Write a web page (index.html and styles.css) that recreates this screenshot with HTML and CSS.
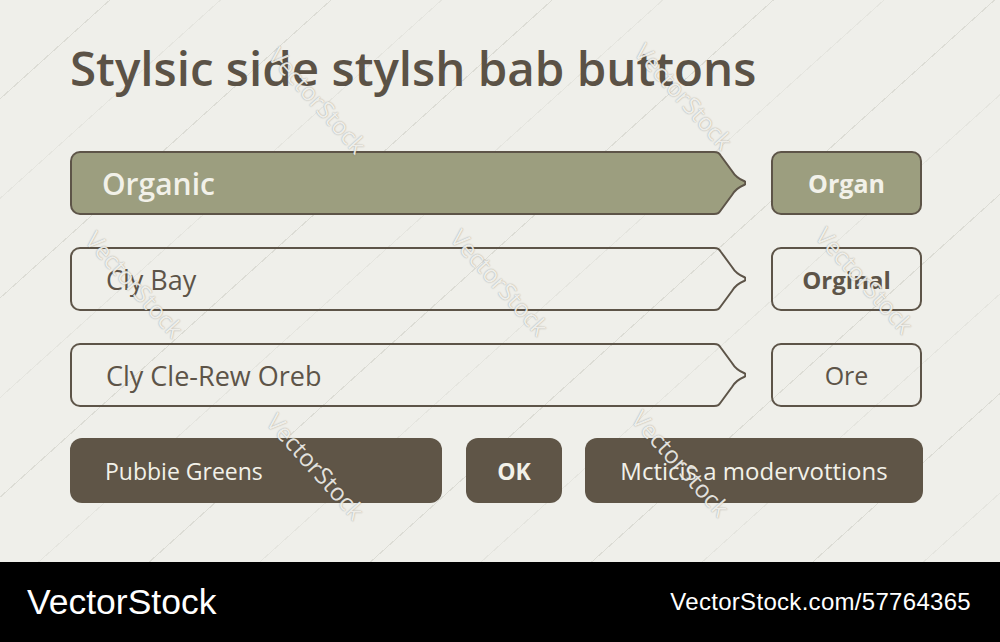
FILE: index.html
```html
<!DOCTYPE html>
<html lang="en">
<head>
    <meta charset="UTF-8">
    <meta name="viewport" content="width=device-width, initial-scale=1.0">
    <title>Stylsic side stylsh bab buttons</title>
    <link rel="stylesheet" href="styles.css">
</head>
<body>
    <div class="stage">
        <h1 class="title">Stylsic side stylsh bab buttons</h1>

        <div class="rows">
            <div class="row">
                <div class="tab tab-filled">
                    <div class="tab-body"><span class="tab-label label-light">Organic</span></div>
                    <svg class="tab-tip" width="34" height="64" viewBox="0 0 34 64">
                        <path class="tip-fill" d="M0 1 H2 C6 1 7 2 9 5 L20 20 C23 25 27 28 32 30 C34 31 34 33 32 34 C27 36 23 39 20 44 L9 59 C7 62 6 63 2 63 H0 Z"/>
                        <path class="tip-line" d="M0 1 H2 C6 1 7 2 9 5 L20 20 C23 25 27 28 32 30 C34 31 34 33 32 34 C27 36 23 39 20 44 L9 59 C7 62 6 63 2 63 H0"/>
                    </svg>
                </div>
                <div class="side-btn side-filled">Organ</div>
            </div>

            <div class="row">
                <div class="tab">
                    <div class="tab-body"><span class="tab-label">Cly Bay</span></div>
                    <svg class="tab-tip" width="34" height="64" viewBox="0 0 34 64">
                        <path class="tip-line" d="M0 1 H2 C6 1 7 2 9 5 L20 20 C23 25 27 28 32 30 C34 31 34 33 32 34 C27 36 23 39 20 44 L9 59 C7 62 6 63 2 63 H0"/>
                    </svg>
                </div>
                <div class="side-btn side-bold">Orginal</div>
            </div>

            <div class="row">
                <div class="tab">
                    <div class="tab-body"><span class="tab-label">Cly Cle-Rew Oreb</span></div>
                    <svg class="tab-tip" width="34" height="64" viewBox="0 0 34 64">
                        <path class="tip-line" d="M0 1 H2 C6 1 7 2 9 5 L20 20 C23 25 27 28 32 30 C34 31 34 33 32 34 C27 36 23 39 20 44 L9 59 C7 62 6 63 2 63 H0"/>
                    </svg>
                </div>
                <div class="side-btn">Ore</div>
            </div>

            <div class="row row-bottom">
                <div class="dark-btn dark-wide">Pubbie Greens</div>
                <div class="dark-btn dark-ok">OK</div>
                <div class="dark-btn dark-long">Mcticis a modervottions</div>
            </div>
        </div>

        <!-- watermarks -->
        <span class="mark" style="left: 318px; top: 100px;">VectorStock</span>
        <span class="mark" style="left: 684px; top: 96px;">VectorStock</span>
        <span class="mark" style="left: 135px; top: 284px;">VectorStock</span>
        <span class="mark" style="left: 500px; top: 282px;">VectorStock</span>
        <span class="mark" style="left: 865px; top: 280px;">VectorStock</span>
        <span class="mark" style="left: 316px; top: 466px;">VectorStock</span>
        <span class="mark" style="left: 681px; top: 463px;">VectorStock</span>
    </div>

    <div class="footer">
        <span class="brand">VectorStock</span>
        <span class="ref">VectorStock.com/57764365</span>
    </div>
</body>
</html>
```

FILE: styles.css
```css
body {
    margin: 0;
    width: 1000px;
    height: 642px;
    overflow: hidden;
    font-family: "Open Sans", "Noto Sans", sans-serif;
    color: #5d5448;
}

.stage {
    position: relative;
    height: 562px;
    box-sizing: border-box;
    padding: 40px 0 0 70px;
    overflow: hidden;
    background-color: #efefea;
    background-image:
        repeating-linear-gradient(138deg,
            transparent 0px, transparent 73px,
            #dcdcd5 73px, #dcdcd5 74px,
            transparent 74px, transparent 147px,
            #e5e5df 147px, #e5e5df 148px);
}

.title {
    margin: 0;
    font-size: 47.5px;
    line-height: 56px;
    font-weight: 600;
    color: #5b5246;
}

.rows {
    margin-top: 55px;
    display: flex;
    flex-direction: column;
    gap: 32px;
}

.row {
    display: flex;
    gap: 25px;
}

.row-bottom {
    margin-top: -1px;
    gap: 24px;
}

/* arrow tabs */
.tab {
    flex: none;
    width: 676px;
    height: 64px;
    display: flex;
}

.tab-body {
    flex: 1;
    box-sizing: border-box;
    height: 64px;
    border: 2px solid #5d5448;
    border-right: none;
    border-radius: 10px 0 0 10px;
    display: flex;
    align-items: center;
    padding-left: 34px;
}

.tab-filled .tab-body {
    background-color: #9c9e7f;
    padding-left: 30px;
}

.tab-tip {
    display: block;
    flex: none;
}

.tip-fill {
    fill: #9c9e7f;
}

.tip-line {
    fill: none;
    stroke: #5d5448;
    stroke-width: 2;
    stroke-linejoin: round;
}

.tab-label {
    font-size: 27px;
    color: #5d5448;
}

.label-light {
    font-size: 30px;
    font-weight: 600;
    color: #f2f1e9;
}

/* small buttons on the right */
.side-btn {
    flex: none;
    box-sizing: border-box;
    width: 151px;
    height: 64px;
    border: 2px solid #5d5448;
    border-radius: 10px;
    display: flex;
    align-items: center;
    justify-content: center;
    font-size: 25px;
    color: #5d5448;
}

.side-filled {
    background-color: #9c9e7f;
    color: #f2f1e9;
    font-weight: 700;
}

.side-bold {
    font-size: 24px;
    font-weight: 700;
}

/* dark buttons */
.dark-btn {
    flex: none;
    box-sizing: border-box;
    height: 65px;
    border-radius: 12px;
    background-color: #5f5547;
    color: #f2f1e9;
    display: flex;
    align-items: center;
    font-size: 23px;
}

.dark-wide {
    width: 372px;
    padding-left: 35px;
}

.dark-ok {
    width: 96px;
    justify-content: center;
    font-weight: 700;
}

.dark-long {
    width: 338px;
    margin-left: -1px;
    justify-content: center;
    font-size: 24px;
}

.mark {
    position: absolute;
    transform: translate(-50%, -50%) rotate(48deg);
    font-size: 24px;
    color: rgba(252, 252, 249, 0.85);
    text-shadow:
        0 0 1px rgba(90, 84, 72, 0.45),
        0 0 2px rgba(90, 84, 72, 0.2);
    white-space: nowrap;
    pointer-events: none;
}

/* footer */
.footer {
    height: 80px;
    background-color: #000;
    display: flex;
    align-items: center;
    justify-content: space-between;
    padding: 0 29px 0 27px;
    font-family: "Liberation Sans", Arial, sans-serif;
    color: #fff;
}

.brand {
    font-size: 35.5px;
}

.ref {
    font-size: 24px;
    letter-spacing: 0.3px;
}
```
